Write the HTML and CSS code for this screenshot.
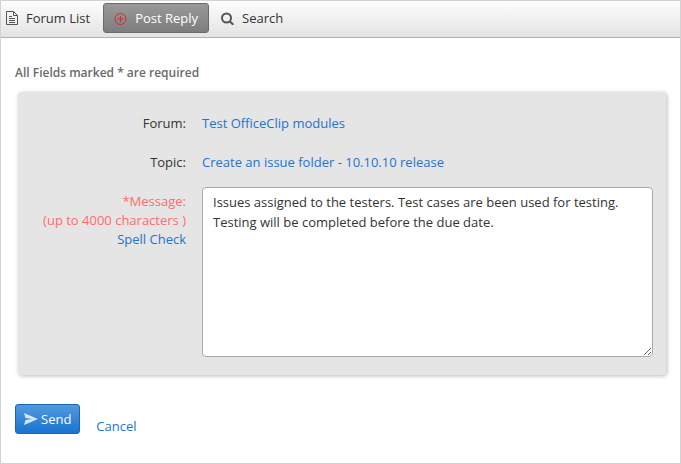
FILE: index.html
```html
<!DOCTYPE html>
<html lang="en">
<head>
  <meta charset="UTF-8">
  <meta name="viewport" content="width=device-width, initial-scale=1.0">
  <title>Post Reply</title>
  <link rel="stylesheet" href="styles.css">
</head>
<body>
  <nav class="toolbar">
    <a href="#" class="tool">
      <svg width="14" height="14" viewBox="0 0 14 14" fill="none" stroke="#555">
        <path d="M1.5 .5h7l4 4v9h-11zM8.5 .5v4h4M4 5.5h3M4 7.5h6M4 9.5h6M4 11.5h6"/>
      </svg>
      <span>Forum List</span>
    </a>
    <a href="#" class="tool active">
      <svg width="14" height="14" viewBox="0 0 14 14" fill="none" stroke="#e3242b">
        <circle cx="6.5" cy="8" r="5.5"/>
        <path d="M6.5 5v6M3.500 8h6"/>
      </svg>
      <span>Post Reply</span>
    </a>
    <a href="#" class="tool">
      <svg width="14" height="14" viewBox="0 0 14 14" fill="none" stroke="#555" stroke-width="2">
        <circle cx="5.500" cy="7" r="4.500"/>
        <path d="M8.700 10.200l3.600 3.600"/>
      </svg>
      <span>Search</span>
    </a>
  </nav>

  <form class="reply">
    <p class="note">All Fields marked * are required</p>

    <div class="panel">
      <div class="row">
        <span class="label">Forum:</span>
        <a href="#">Test OfficeClip modules</a>
      </div>
      <div class="row">
        <span class="label">Topic:</span>
        <a href="#">Create an issue folder - 10.10.10 release</a>
      </div>
      <div class="row message">
        <div class="label">
          <label for="message" class="required">*Message:<br>(up to 4000 characters )</label>
          <a href="#">Spell Check</a>
        </div>
        <textarea id="message" maxlength="4000">Issues assigned to the testers. Test cases are been used for testing.
Testing will be completed before the due date.</textarea>
      </div>
    </div>

    <div class="actions">
      <button type="submit" class="send">
        <svg width="14" height="12" viewBox="0 0 14 12" fill="#d6e6f8">
          <path d="M0 0l14 6-14 6 1.5-5L8 6 1.5 5z"/>
        </svg>
        <span>Send</span>
      </button>
      <a href="#" class="cancel">Cancel</a>
    </div>
  </form>
</body>
</html>
```
FILE: styles.css
```css
* {
  box-sizing: border-box;
}

body {
  margin: 0;
  min-height: 100vh;
  border: 1px solid #d3d3d3;
  background: #fff;
  color: #333;
  font-family: "Open Sans", "Noto Sans", sans-serif;
  font-size: 13px;
  line-height: 19px;
}

a {
  color: #1c74d0;
  text-decoration: none;
}

.toolbar {
  display: flex;
  gap: 1px;
  padding: 2px 0 4px;
  border-bottom: 1px solid #b0b0b0;
  background: linear-gradient(#fdfdfd, #e3e3e3);
}

.tool {
  display: flex;
  align-items: center;
  gap: 7px;
  height: 30px;
  padding: 0 10px;
  border: 1px solid transparent;
  border-radius: 3px;
  color: #333;
}

.tool:first-child {
  padding: 0 11px 0 3px;
}

.active {
  border-color: #6a6a6a;
  background: linear-gradient(#999, #7d7d7d);
  color: #fff;
}

.reply {
  padding: 25px 14px;
}

.note {
  margin: 0;
  color: #6a6a6a;
  font-size: 12px;
  font-weight: 600;
}

.panel {
  display: flex;
  flex-direction: column;
  gap: 20px;
  margin: 10px 0 0 3px;
  padding: 22px 13px 18px 0;
  border-radius: 4px;
  background: #e5e5e5;
  box-shadow: 1px 1px 4px #bbb;
}

.row {
  display: flex;
  gap: 16px;
}

.label {
  width: 168px;
  flex: none;
  text-align: right;
}

.message {
  margin-top: -5px;
}

.message .label {
  padding-top: 5px;
}

.required {
  display: block;
  color: #ff6b6b;
}

textarea {
  flex: 1;
  min-width: 0;
  height: 170px;
  padding: 4px 10px;
  border: 1px solid #aaa;
  border-radius: 4px;
  background: #fff;
  color: #333;
  font: inherit;
  line-height: 20px;
}

.actions {
  display: flex;
  align-items: flex-start;
  gap: 16px;
  margin-top: 29px;
}

.send {
  display: flex;
  align-items: center;
  gap: 3px;
  height: 30px;
  padding: 0 8px;
  border: 1px solid #1a66b3;
  border-radius: 3px;
  background: linear-gradient(#5199e0, #1a73d0);
  color: #fff;
  font: inherit;
}

.cancel {
  padding-top: 13px;
}
```
